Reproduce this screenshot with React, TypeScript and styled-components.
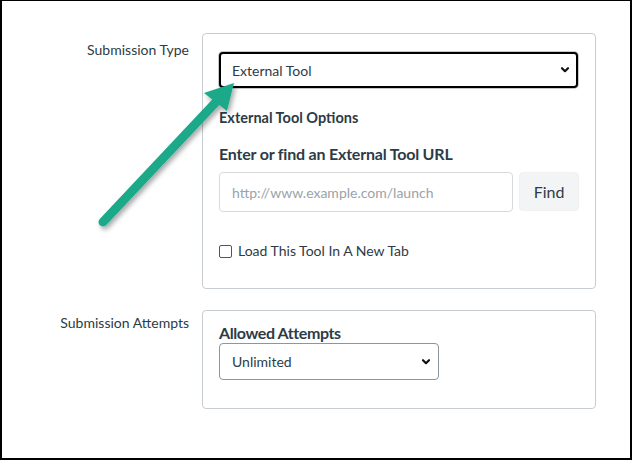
import React from "react";
import styled, { createGlobalStyle } from "styled-components";

const Global = createGlobalStyle`
  html, body { margin: 0; padding: 0; background: #fff; }
  body { font-family: Lato, "Noto Sans", sans-serif; color: #2d3b45; }
  * { box-sizing: border-box; }
`;

const Page = styled.div`
  position: relative;
  width: 632px;
  height: 460px;
  border: 2px solid #000;
  border-top-width: 1px;
  padding: 32px 35px 0 0;
  background: #fff;
  overflow: hidden;
`;

const Form = styled.div`
  display: grid;
  grid-template-columns: 187px 1fr;
  column-gap: 13px;
  row-gap: 21px;
`;

const Label = styled.div<{ $top: number }>`
  text-align: right;
  font-size: 14px;
  color: #2d3b45;
  padding-top: ${(p) => p.$top}px;
  line-height: 18px;
`;

const Card = styled.div<{ $h: number; $pt: number }>`
  border: 1px solid #c7cdd1;
  border-radius: 4px;
  height: ${(p) => p.$h}px;
  padding: ${(p) => p.$pt}px 16px 0 16px;
  display: flex;
  flex-direction: column;
`;

const SelectWrap = styled.div<{ $w: number; $h: number }>`
  position: relative;
  width: ${(p) => p.$w}px;
  height: ${(p) => p.$h}px;
`;

const Select = styled.select<{ $focused?: boolean }>`
  appearance: none;
  -webkit-appearance: none;
  width: 100%;
  height: 100%;
  font-family: Lato, "Noto Sans", sans-serif;
  font-size: 14px;
  color: #2d3b45;
  background: #fff;
  padding: 0 28px 0 12px;
  border-radius: 4px;
  border: ${(p) => (p.$focused ? "2px solid #000" : "1px solid #8b969e")};
  box-shadow: ${(p) => (p.$focused ? "0 0 0 1px #c8c8c8" : "none")};
  padding-left: ${(p) => (p.$focused ? "11px" : "12px")};
  outline: none;
`;

const Chevron = styled.svg`
  position: absolute;
  right: 8px;
  top: 50%;
  margin-top: -4px;
  pointer-events: none;
`;

const SubHeading = styled.div`
  font-weight: 700;
  font-size: 14.5px;
  line-height: 18px;
  margin-top: 21px;
`;

const Heading = styled.div<{ $mt: number; $size: number; $ls: number }>`
  font-weight: 700;
  font-size: ${(p) => p.$size}px;
  letter-spacing: ${(p) => p.$ls}px;
  line-height: 20px;
  margin-top: ${(p) => p.$mt}px;
`;

const UrlRow = styled.div`
  display: flex;
  gap: 6px;
  margin-top: 8px;
  height: 40px;
`;

const UrlInput = styled.input`
  width: 294px;
  height: 40px;
  border: 1px solid #d6dadd;
  border-radius: 4px;
  padding: 0 12px;
  font-family: Lato, "Noto Sans", sans-serif;
  font-size: 14px;
  color: #2d3b45;
  outline: none;
  &::placeholder { color: #9aa3a9; }
`;

const FindButton = styled.button`
  width: 60px;
  height: 39px;
  border: 1px solid #f0f1f2;
  border-radius: 4px;
  background: #f3f4f5;
  font-family: Lato, "Noto Sans", sans-serif;
  font-size: 16px;
  color: #2d3b45;
  padding: 0;
`;

const CheckRow = styled.label`
  display: flex;
  align-items: center;
  gap: 6px;
  margin-top: 30px;
  font-size: 14px;
  line-height: 18px;
`;

const Check = styled.span`
  width: 13px;
  height: 13px;
  border: 1px solid #555;
  border-radius: 2px;
  background: #fff;
  display: inline-block;
`;

const ArrowLayer = styled.svg`
  position: absolute;
  left: 0;
  top: 0;
  pointer-events: none;
`;

const ChevronIcon = () => (
  <Chevron width="10" height="8" viewBox="0 0 10 8">
    <path d="M2 2.2 L5 5.2 L8 2.2" fill="none" stroke="#111" strokeWidth="2.2" strokeLinecap="round" strokeLinejoin="round" />
  </Chevron>
);

export default function App() {
  return (
    <>
      <Global />
      <Page>
        <Form>
          <Label $top={8}>Submission Type</Label>
          <Card $h={256} $pt={18}>
            <SelectWrap $w={359} $h={36}>
              <Select $focused defaultValue="external">
                <option value="external">External Tool</option>
              </Select>
              <ChevronIcon />
            </SelectWrap>
            <SubHeading>External Tool Options</SubHeading>
            <Heading $mt={17} $size={16} $ls={-0.2}>Enter or find an External Tool URL</Heading>
            <UrlRow>
              <UrlInput placeholder="http://www.example.com/launch" />
              <FindButton>Find</FindButton>
            </UrlRow>
            <CheckRow>
              <Check />
              Load This Tool In A New Tab
            </CheckRow>
          </Card>
          <Label $top={4}>Submission Attempts</Label>
          <Card $h={99} $pt={11}>
            <Heading $mt={1} $size={16} $ls={-0.4}>Allowed Attempts</Heading>
            <SelectWrap $w={220} $h={37}>
              <Select defaultValue="unlimited">
                <option value="unlimited">Unlimited</option>
              </Select>
              <ChevronIcon />
            </SelectWrap>
          </Card>
        </Form>
        <ArrowLayer width="632" height="460" viewBox="0 0 632 460">
          <defs>
            <filter id="sh" x="-20%" y="-20%" width="140%" height="140%">
              <feDropShadow dx="2" dy="3" stdDeviation="2.5" floodColor="#000" floodOpacity="0.35" />
            </filter>
          </defs>
          <g filter="url(#sh)">
            <line x1="101" y1="221" x2="214" y2="101" stroke="#1aa98a" strokeWidth="9" strokeLinecap="round" />
            <polygon points="232,82 202,92 225,110" fill="#1aa98a" />
          </g>
        </ArrowLayer>
      </Page>
    </>
  );
}
